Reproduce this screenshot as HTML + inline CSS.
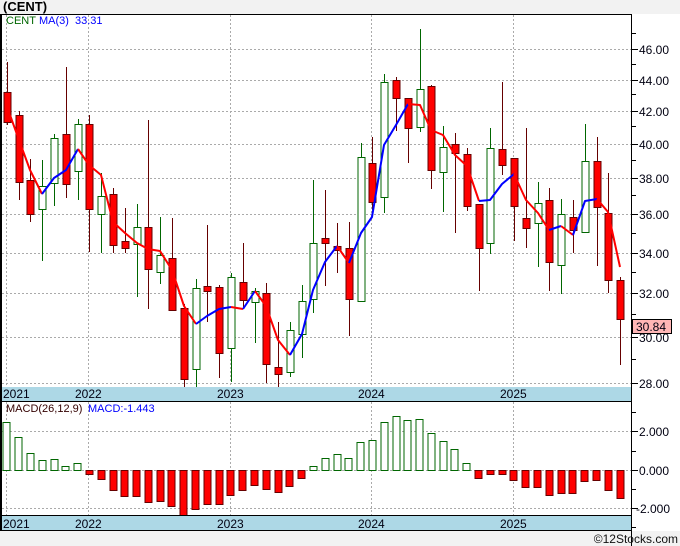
<!DOCTYPE html><html><head><meta charset="utf-8"><style>
body{margin:0;background:#fff}
svg{display:block;font-family:"Liberation Sans",sans-serif}
.rl{stroke:#600;stroke-width:1}.gl{stroke:#060;stroke-width:1}
.rr{fill:#f00;stroke:#600;stroke-width:1}.gr{fill:#fff;stroke:#060;stroke-width:1}
.gd{stroke:#aaa;stroke-width:1;stroke-dasharray:2,2}
.ax{font-size:12px;fill:#001}
.tk{stroke:#000;stroke-width:1}
</style></head><body>
<svg width="680" height="546" viewBox="0 0 680 546">
<rect x="0" y="0" width="680" height="546" fill="#fff"/>
<rect x="0" y="0" width="680" height="14" fill="#f2f2f2"/>
<rect x="0" y="531" width="680" height="15" fill="#f2f2f2"/>
<text x="3" y="11" font-size="13" font-weight="bold">(CENT)</text>
<!-- grid -->
<g class="gd">
<line x1="2" x2="632" y1="49.5" y2="49.5"/><line x1="2" x2="632" y1="80.5" y2="80.5"/><line x1="2" x2="632" y1="111.5" y2="111.5"/><line x1="2" x2="632" y1="144.5" y2="144.5"/><line x1="2" x2="632" y1="178.5" y2="178.5"/><line x1="2" x2="632" y1="214.5" y2="214.5"/><line x1="2" x2="632" y1="253.5" y2="253.5"/><line x1="2" x2="632" y1="293.5" y2="293.5"/><line x1="2" x2="632" y1="337.5" y2="337.5"/><line x1="2" x2="632" y1="383.5" y2="383.5"/>
<line x1="2" x2="632" y1="431.5" y2="431.5"/><line x1="2" x2="632" y1="470.5" y2="470.5"/><line x1="2" x2="632" y1="508.5" y2="508.5"/>
<line x1="6.5" x2="6.5" y1="15" y2="387"/><line x1="88.5" x2="88.5" y1="15" y2="387"/><line x1="230.5" x2="230.5" y1="15" y2="387"/><line x1="371.5" x2="371.5" y1="15" y2="387"/><line x1="513.5" x2="513.5" y1="15" y2="387"/>
<line x1="6.5" x2="6.5" y1="402" y2="515"/><line x1="88.5" x2="88.5" y1="402" y2="515"/><line x1="230.5" x2="230.5" y1="402" y2="515"/><line x1="371.5" x2="371.5" y1="402" y2="515"/><line x1="513.5" x2="513.5" y1="402" y2="515"/>
</g>
<svg x="0" y="15" width="632" height="372" viewBox="0 15 632 372" overflow="hidden">
<g>
<line class="rl" x1="7.5" x2="7.5" y1="62" y2="125"/><rect class="rr" x="4" y="92.5" width="7" height="30"/>
<line class="rl" x1="19.5" x2="19.5" y1="111" y2="200"/><rect class="rr" x="16" y="115.5" width="7" height="67"/>
<line class="rl" x1="30.5" x2="30.5" y1="159" y2="222"/><rect class="rr" x="27" y="180.5" width="7" height="34"/>
<line class="gl" x1="42.5" x2="42.5" y1="160" y2="261"/><rect class="gr" x="39" y="186.5" width="7" height="23"/>
<line class="gl" x1="54.5" x2="54.5" y1="134" y2="206"/><rect class="gr" x="51" y="138.5" width="7" height="45"/>
<line class="rl" x1="66.5" x2="66.5" y1="67" y2="198"/><rect class="rr" x="63" y="134.5" width="7" height="50"/>
<line class="gl" x1="78.5" x2="78.5" y1="119" y2="200"/><rect class="gr" x="75" y="124.5" width="7" height="47"/>
<line class="rl" x1="89.5" x2="89.5" y1="115" y2="252"/><rect class="rr" x="86" y="124.5" width="7" height="85"/>
<line class="gl" x1="101.5" x2="101.5" y1="173" y2="253"/><rect class="gr" x="98" y="196.5" width="7" height="18"/>
<line class="rl" x1="113.5" x2="113.5" y1="188" y2="253"/><rect class="rr" x="110" y="194.5" width="7" height="51"/>
<line class="rl" x1="125.5" x2="125.5" y1="208" y2="253"/><rect class="rr" x="122" y="241.5" width="7" height="7"/>
<line class="gl" x1="137.5" x2="137.5" y1="204" y2="297"/><rect class="gr" x="134" y="227.5" width="7" height="17"/>
<line class="rl" x1="148.5" x2="148.5" y1="120" y2="309"/><rect class="rr" x="145" y="227.5" width="7" height="42"/>
<line class="gl" x1="160.5" x2="160.5" y1="217" y2="284"/><rect class="gr" x="157" y="255.5" width="7" height="17"/>
<line class="rl" x1="172.5" x2="172.5" y1="218" y2="310"/><rect class="rr" x="169" y="258.5" width="7" height="52"/>
<line class="rl" x1="184.5" x2="184.5" y1="304" y2="387"/><rect class="rr" x="181" y="308.5" width="7" height="71"/>
<line class="gl" x1="196.5" x2="196.5" y1="279" y2="387"/><rect class="gr" x="193" y="288.5" width="7" height="81"/>
<line class="rl" x1="207.5" x2="207.5" y1="225" y2="322"/><rect class="rr" x="204" y="286.5" width="7" height="5"/>
<line class="rl" x1="219.5" x2="219.5" y1="285" y2="378"/><rect class="rr" x="216" y="287.5" width="7" height="66"/>
<line class="gl" x1="231.5" x2="231.5" y1="273" y2="382"/><rect class="gr" x="228" y="277.5" width="7" height="71"/>
<line class="rl" x1="243.5" x2="243.5" y1="243" y2="307"/><rect class="rr" x="240" y="282.5" width="7" height="18"/>
<line class="gl" x1="255.5" x2="255.5" y1="288" y2="343"/><rect class="gr" x="252" y="291.5" width="7" height="11"/>
<line class="rl" x1="266.5" x2="266.5" y1="283" y2="383"/><rect class="rr" x="263" y="293.5" width="7" height="71"/>
<line class="rl" x1="278.5" x2="278.5" y1="322" y2="387"/><rect class="rr" x="275" y="367.5" width="7" height="7"/>
<line class="gl" x1="290.5" x2="290.5" y1="322" y2="377"/><rect class="gr" x="287" y="330.5" width="7" height="42"/>
<line class="gl" x1="302.5" x2="302.5" y1="285" y2="358"/><rect class="gr" x="299" y="301.5" width="7" height="33"/>
<line class="gl" x1="313.5" x2="313.5" y1="180" y2="313"/><rect class="gr" x="310" y="243.5" width="7" height="56"/>
<line class="rl" x1="325.5" x2="325.5" y1="190" y2="286"/><rect class="rr" x="322" y="238.5" width="7" height="5"/>
<line class="rl" x1="337.5" x2="337.5" y1="223" y2="273"/><rect class="rr" x="334" y="246.5" width="7" height="4"/>
<line class="rl" x1="349.5" x2="349.5" y1="222" y2="336"/><rect class="rr" x="346" y="248.5" width="7" height="51"/>
<line class="gl" x1="361.5" x2="361.5" y1="143" y2="301"/><rect class="gr" x="358" y="157.5" width="7" height="144"/>
<line class="rl" x1="372.5" x2="372.5" y1="137" y2="210"/><rect class="rr" x="369" y="163.5" width="7" height="39"/>
<line class="gl" x1="384.5" x2="384.5" y1="74" y2="213"/><rect class="gr" x="381" y="82.5" width="7" height="115"/>
<line class="rl" x1="396.5" x2="396.5" y1="77" y2="131"/><rect class="rr" x="393" y="80.5" width="7" height="18"/>
<line class="rl" x1="408.5" x2="408.5" y1="98" y2="163"/><rect class="rr" x="405" y="98.5" width="7" height="30"/>
<line class="gl" x1="420.5" x2="420.5" y1="29" y2="132"/><rect class="gr" x="417" y="89.5" width="7" height="38"/>
<line class="rl" x1="431.5" x2="431.5" y1="85" y2="189"/><rect class="rr" x="428" y="86.5" width="7" height="84"/>
<line class="gl" x1="443.5" x2="443.5" y1="126" y2="212"/><rect class="gr" x="440" y="147.5" width="7" height="25"/>
<line class="rl" x1="455.5" x2="455.5" y1="133" y2="233"/><rect class="rr" x="452" y="144.5" width="7" height="9"/>
<line class="rl" x1="467.5" x2="467.5" y1="148" y2="211"/><rect class="rr" x="464" y="154.5" width="7" height="52"/>
<line class="rl" x1="479.5" x2="479.5" y1="204" y2="291"/><rect class="rr" x="476" y="204.5" width="7" height="44"/>
<line class="gl" x1="490.5" x2="490.5" y1="128" y2="254"/><rect class="gr" x="487" y="148.5" width="7" height="95"/>
<line class="rl" x1="502.5" x2="502.5" y1="82" y2="175"/><rect class="rr" x="499" y="149.5" width="7" height="16"/>
<line class="rl" x1="514.5" x2="514.5" y1="158" y2="241"/><rect class="rr" x="511" y="158.5" width="7" height="48"/>
<line class="rl" x1="526.5" x2="526.5" y1="128" y2="248"/><rect class="rr" x="523" y="218.5" width="7" height="10"/>
<line class="gl" x1="538.5" x2="538.5" y1="182" y2="267"/><rect class="gr" x="535" y="203.5" width="7" height="20"/>
<line class="rl" x1="549.5" x2="549.5" y1="188" y2="291"/><rect class="rr" x="546" y="200.5" width="7" height="62"/>
<line class="gl" x1="561.5" x2="561.5" y1="199" y2="294"/><rect class="gr" x="558" y="214.5" width="7" height="51"/>
<line class="rl" x1="573.5" x2="573.5" y1="200" y2="253"/><rect class="rr" x="570" y="217.5" width="7" height="13"/>
<line class="gl" x1="585.5" x2="585.5" y1="124" y2="232"/><rect class="gr" x="582" y="161.5" width="7" height="71"/>
<line class="rl" x1="597.5" x2="597.5" y1="137" y2="266"/><rect class="rr" x="594" y="161.5" width="7" height="46"/>
<line class="rl" x1="608.5" x2="608.5" y1="173" y2="293"/><rect class="rr" x="605" y="213.5" width="7" height="67"/>
<line class="rl" x1="620.5" x2="620.5" y1="277" y2="365"/><rect class="rr" x="617" y="280.5" width="7" height="39"/>
</g>
<g fill="none" stroke-width="2" stroke-linejoin="round">
<polyline stroke="#f00" points="10,115 19,140 30,170 42,194"/>
<polyline stroke="#00f" points="42,194 54,178 66,170 78,149"/>
<polyline stroke="#f00" points="78,149 89,165 101,175 113,222 125,233 137,243 148,249 160,251 172,270 184,306 196,324"/>
<polyline stroke="#00f" points="196,324 207,316 219,309 231,307"/>
<polyline stroke="#f00" points="231,307 243,309"/>
<polyline stroke="#00f" points="243,309 255,291"/>
<polyline stroke="#f00" points="255,291 266,306 278,340 290,355"/>
<polyline stroke="#00f" points="290,355 302,334 313,290 325,262 337,246"/>
<polyline stroke="#f00" points="337,246 349,263"/>
<polyline stroke="#00f" points="349,263 361,233 372,217 384,145 396,125 408,104"/>
<polyline stroke="#f00" points="408,104 420,105 431,130 443,135 455,155 467,166 479,201"/>
<polyline stroke="#00f" points="479,201 490,200 502,184 514,174"/>
<polyline stroke="#f00" points="514,174 526,200 538,213 549,230"/>
<polyline stroke="#00f" points="549,230 561,226"/>
<polyline stroke="#f00" points="561,226 573,235"/>
<polyline stroke="#00f" points="573,235 585,201 597,199"/>
<polyline stroke="#f00" points="597,199 608,212 620,267"/>
</g>
</svg>
<text x="6" y="24" font-size="11" fill="#060">CENT</text>
<text x="39" y="24" font-size="11" fill="#00f">MA(3)</text>
<text x="75" y="24" font-size="11" fill="#00f">33.31</text>
<!-- bands -->
<rect x="0" y="387" width="632" height="14" fill="#add8e6"/>
<rect x="0" y="516" width="632" height="14" fill="#add8e6"/>
<g class="ax" fill="#111">
<text x="3" y="398">2021</text><text x="75" y="398">2022</text><text x="217" y="398">2023</text><text x="358" y="398">2024</text><text x="500" y="398">2025</text>
<text x="3" y="528">2021</text><text x="75" y="528">2022</text><text x="217" y="528">2023</text><text x="358" y="528">2024</text><text x="500" y="528">2025</text>
</g>
<!-- MACD -->
<text x="6" y="412" font-size="11" fill="#300">MACD(26,12,9)</text>
<text x="88" y="412" font-size="11" fill="#00f">MACD:-1.443</text>
<g class="gr">
<rect x="3" y="422.5" width="7" height="48"/><rect x="15" y="437.5" width="7" height="33"/><rect x="27" y="453.5" width="7" height="17"/><rect x="39" y="460.5" width="7" height="10"/><rect x="51" y="459.5" width="7" height="11"/><rect x="62" y="466.5" width="7" height="4"/><rect x="74" y="463.5" width="7" height="7"/>
<rect x="310" y="466.5" width="7" height="4"/><rect x="322" y="458.5" width="7" height="12"/><rect x="334" y="454.5" width="7" height="16"/><rect x="345" y="458.5" width="7" height="12"/><rect x="357" y="442.5" width="7" height="28"/><rect x="369" y="440.5" width="7" height="30"/><rect x="381" y="422.5" width="7" height="48"/><rect x="393" y="416.5" width="7" height="54"/><rect x="404" y="420.5" width="7" height="50"/><rect x="416" y="419.5" width="7" height="51"/><rect x="428" y="433.5" width="7" height="37"/><rect x="440" y="441.5" width="7" height="29"/><rect x="451" y="449.5" width="7" height="21"/><rect x="463" y="463.5" width="7" height="7"/>
</g>
<g class="rr">
<rect x="86" y="470.5" width="7" height="4"/><rect x="98" y="470.5" width="7" height="9"/><rect x="110" y="470.5" width="7" height="20"/><rect x="121" y="470.5" width="7" height="26"/><rect x="133" y="470.5" width="7" height="26"/><rect x="145" y="470.5" width="7" height="32"/><rect x="157" y="470.5" width="7" height="31"/><rect x="168" y="470.5" width="7" height="36"/><rect x="180" y="470.5" width="7" height="45"/><rect x="192" y="470.5" width="7" height="39"/><rect x="204" y="470.5" width="7" height="34"/><rect x="216" y="470.5" width="7" height="34"/><rect x="227" y="470.5" width="7" height="25"/><rect x="239" y="470.5" width="7" height="20"/><rect x="251" y="470.5" width="7" height="15"/><rect x="263" y="470.5" width="7" height="19"/><rect x="275" y="470.5" width="7" height="22"/><rect x="286" y="470.5" width="7" height="16"/><rect x="298" y="470.5" width="7" height="8"/>
<rect x="475" y="470.5" width="7" height="8"/><rect x="487" y="470.5" width="7" height="4"/><rect x="499" y="470.5" width="7" height="4"/><rect x="510" y="470.5" width="7" height="10"/><rect x="522" y="470.5" width="7" height="17"/><rect x="534" y="470.5" width="7" height="17"/><rect x="546" y="470.5" width="7" height="25"/><rect x="558" y="470.5" width="7" height="23"/><rect x="569" y="470.5" width="7" height="23"/><rect x="581" y="470.5" width="7" height="11"/><rect x="593" y="470.5" width="7" height="10"/><rect x="605" y="470.5" width="7" height="20"/><rect x="617" y="470.5" width="7" height="28"/>
</g>
<!-- frame -->
<g class="tk">
<line x1="0" x2="632" y1="14.5" y2="14.5"/>
<line x1="0" x2="632" y1="401.5" y2="401.5"/>
<line x1="0" x2="632" y1="515.5" y2="515.5"/>
<line x1="0" x2="632" y1="530.5" y2="530.5"/>
<line x1="1" x2="1" y1="14" y2="531" stroke-width="2"/>
<line x1="631.5" x2="631.5" y1="14" y2="546"/>
</g>
<!-- right axis ticks -->
<g class="tk">
<line x1="632" x2="638" y1="49.5" y2="49.5"/><line x1="632" x2="638" y1="80.5" y2="80.5"/><line x1="632" x2="638" y1="111.5" y2="111.5"/><line x1="632" x2="638" y1="144.5" y2="144.5"/><line x1="632" x2="638" y1="178.5" y2="178.5"/><line x1="632" x2="638" y1="214.5" y2="214.5"/><line x1="632" x2="638" y1="253.5" y2="253.5"/><line x1="632" x2="638" y1="293.5" y2="293.5"/><line x1="632" x2="638" y1="337.5" y2="337.5"/><line x1="632" x2="638" y1="383.5" y2="383.5"/>
<line x1="632" x2="636" y1="33.5" y2="33.5"/><line x1="632" x2="636" y1="64.5" y2="64.5"/><line x1="632" x2="636" y1="94.5" y2="94.5"/><line x1="632" x2="636" y1="126.5" y2="126.5"/><line x1="632" x2="636" y1="160.5" y2="160.5"/><line x1="632" x2="636" y1="195.5" y2="195.5"/><line x1="632" x2="636" y1="233.5" y2="233.5"/><line x1="632" x2="636" y1="272.5" y2="272.5"/><line x1="632" x2="636" y1="314.5" y2="314.5"/><line x1="632" x2="636" y1="359.5" y2="359.5"/>
<line x1="632" x2="638" y1="431.5" y2="431.5"/><line x1="632" x2="638" y1="470.5" y2="470.5"/><line x1="632" x2="638" y1="508.5" y2="508.5"/>
<line x1="632" x2="636" y1="412.5" y2="412.5"/><line x1="632" x2="636" y1="451.5" y2="451.5"/><line x1="632" x2="636" y1="489.5" y2="489.5"/><line x1="632" x2="636" y1="527.5" y2="527.5"/>
</g>
<g class="ax">
<text x="639" y="54">46.00</text><text x="639" y="85">44.00</text><text x="639" y="116">42.00</text><text x="639" y="149">40.00</text><text x="639" y="183">38.00</text><text x="639" y="219">36.00</text><text x="639" y="258">34.00</text><text x="639" y="298">32.00</text><text x="639" y="342">30.00</text><text x="639" y="388">28.00</text>
<text x="639" y="436">2.000</text><text x="639" y="475">0.000</text><text x="636" y="513">-2.000</text>
</g>
<rect x="632.5" y="319.5" width="39" height="14" fill="#ffb6b6" stroke="#000"/>
<text x="636" y="331" font-size="12" fill="#001">30.84</text>
<text x="678" y="543" font-size="12" text-anchor="end" fill="#111">©12Stocks.com</text>
</svg>
</body></html>
